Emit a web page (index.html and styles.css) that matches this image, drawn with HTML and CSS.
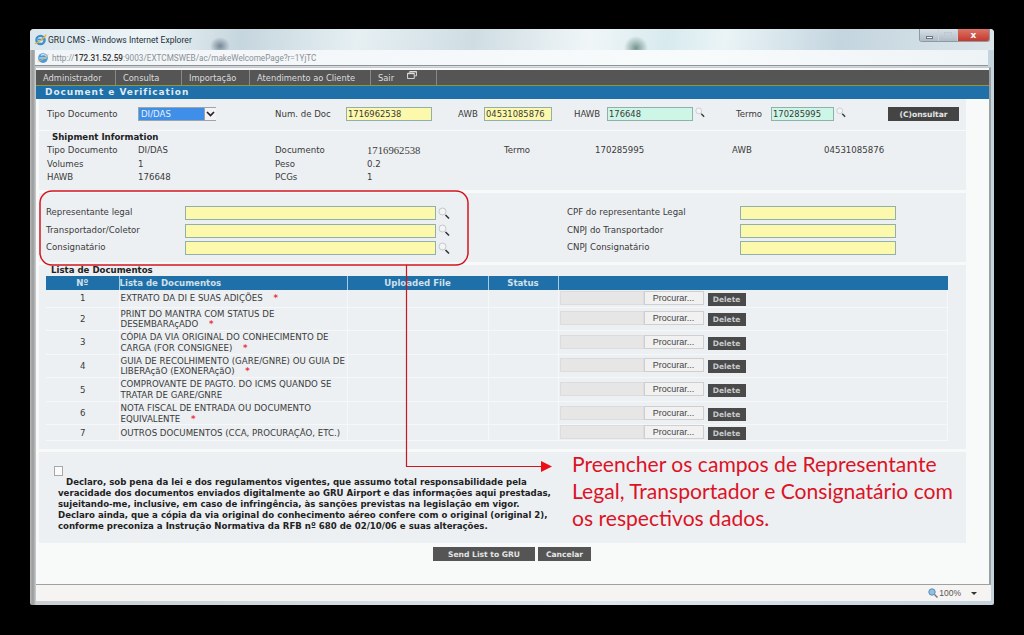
FILE: index.html
```html
<!DOCTYPE html>
<html lang="en">
<head>
    <meta charset="UTF-8">
    <title>GRU CMS - Windows Internet Explorer</title>
    <link rel="stylesheet" href="styles.css">
</head>
<body>
<div class="desktop">
    <div class="ie-window">
        <!-- Title bar -->
        <div class="title-bar">
            <svg class="ie-icon" viewBox="0 0 16 16"><circle cx="8" cy="8.5" r="5" fill="none" stroke="#3f8fd0" stroke-width="3"/><path d="M5 8h7" stroke="#3f8fd0" stroke-width="2"/><path d="M1 13C4 13 13 6 15 2" fill="none" stroke="#e2b53c" stroke-width="1.6"/></svg>
            <span class="title-text">GRU CMS - Windows Internet Explorer</span>
            <div class="win-controls">
                <span class="win-btn"><i class="min-glyph"></i></span>
                <span class="win-btn"><i class="max-glyph"></i></span>
                <span class="win-btn win-close">x</span>
            </div>
        </div>

        <!-- Address bar -->
        <div class="address-bar">
            <svg class="page-icon" viewBox="0 0 16 16"><circle cx="8" cy="8" r="6.5" fill="#4f9ad6"/><path d="M3 8h10M5 4.5c3-2 7-1 8 2" stroke="#d9ecf8" stroke-width="1.6" fill="none"/><path d="M1 12C5 12 12 8 15 3" stroke="#dcb84a" stroke-width="1.2" fill="none"/></svg>
            <span class="url">http://<b>172.31.52.59</b>:9003/EXTCMSWEB/ac/makeWelcomePage?r=1YjTC</span>
        </div>

        <!-- Page -->
        <div class="page">
            <nav class="menu">
                <a class="m-admin">Administrador</a>
                <a class="m-consulta">Consulta</a>
                <a class="m-import">Importação</a>
                <a class="m-atend">Atendimento ao Cliente</a>
                <a class="m-sair">Sair
                    <svg class="restore-icon" viewBox="0 0 11 9"><path d="M3 2V.5h7.5v5H8.500M.5 2.500h7.500v6H.5z" fill="none" stroke="#e8e8e8"/><path d="M.5 3h7.500M3 1h7.500" stroke="#e8e8e8"/></svg>
                </a>
            </nav>
            <div class="page-title">Document e Verification</div>

            <section class="panel search-panel">
                <label>Tipo Documento</label>
                <div class="fake-select"><span>DI/DAS</span><i class="sel-arrow"><svg viewBox="0 0 9 6"><path d="M1 1l3.500 3.500L8 1" fill="none" stroke="#223" stroke-width="1.700"/></svg></i></div>
                <label>Num. de Doc</label>
                <input class="field yellow w86" value="1716962538">
                <label>AWB</label>
                <input class="field yellow w68" value="04531085876">
                <label>HAWB</label>
                <div class="with-lens"><input class="field mint w86" value="176648"><svg class="lens small"><use href="#lens"/></svg></div>
                <label>Termo</label>
                <div class="with-lens"><input class="field mint w63" value="170285995"><svg class="lens small"><use href="#lens"/></svg></div>
                <button class="dark-btn consult">(C)onsultar</button>
            </section>

            <section class="panel ship-panel">
                <h4 class="ship-title">Shipment Information</h4>
                <div class="ship-grid">
                    <span>Tipo Documento</span><span>DI/DAS</span><span>Documento</span><span class="serif-val">1716962538</span><span>Termo</span><span>170285995</span><span>AWB</span><span>04531085876</span>
                    <span>Volumes</span><span>1</span><span>Peso</span><span>0.2</span><span></span><span></span><span></span><span></span>
                    <span>HAWB</span><span>176648</span><span>PCGs</span><span>1</span><span></span><span></span><span></span><span></span>
                </div>
            </section>

            <section class="panel rep-panel">
                <label>Representante legal</label>
                <div class="with-lens"><input class="field yellow w251"><svg class="lens"><use href="#lens"/></svg></div>
                <label>CPF do representante Legal</label>
                <input class="field yellow w156">
                <label>Transportador/Coletor</label>
                <div class="with-lens"><input class="field yellow w251"><svg class="lens"><use href="#lens"/></svg></div>
                <label>CNPJ do Transportador</label>
                <input class="field yellow w156">
                <label>Consignatário</label>
                <div class="with-lens"><input class="field yellow w251"><svg class="lens"><use href="#lens"/></svg></div>
                <label>CNPJ Consignatário</label>
                <input class="field yellow w156">
            </section>

            <section class="panel docs-panel">
                <h4 class="docs-title">Lista de Documentos</h4>
                <table class="docs-table">
                    <colgroup><col class="c-num"><col class="c-name"><col class="c-file"><col class="c-status"><col></colgroup>
                    <thead>
                        <tr><th>Nº</th><th class="left">Lista de Documentos</th><th>Uploaded File</th><th>Status</th><th></th></tr>
                    </thead>
                    <tbody>
                        <tr class="r17"><td class="num">1</td><td class="name">EXTRATO DA DI E SUAS ADIÇÕES <em>*</em></td><td></td><td></td><td><div class="file-row"><span class="file-box"></span><span class="browse">Procurar...</span><span class="del">Delete</span></div></td></tr>
                        <tr><td class="num">2</td><td class="name">PRINT DO MANTRA COM STATUS DE DESEMBARAçADO <em>*</em></td><td></td><td></td><td><div class="file-row"><span class="file-box"></span><span class="browse">Procurar...</span><span class="del">Delete</span></div></td></tr>
                        <tr><td class="num">3</td><td class="name">CÓPIA DA VIA ORIGINAL DO CONHECIMENTO DE CARGA (FOR CONSIGNEE) <em>*</em></td><td></td><td></td><td><div class="file-row"><span class="file-box"></span><span class="browse">Procurar...</span><span class="del">Delete</span></div></td></tr>
                        <tr><td class="num">4</td><td class="name">GUIA DE RECOLHIMENTO (GARE/GNRE) OU GUIA DE LIBERAçãO (EXONERAçãO) <em>*</em></td><td></td><td></td><td><div class="file-row"><span class="file-box"></span><span class="browse">Procurar...</span><span class="del">Delete</span></div></td></tr>
                        <tr><td class="num">5</td><td class="name">COMPROVANTE DE PAGTO. DO ICMS QUANDO SE TRATAR DE GARE/GNRE</td><td></td><td></td><td><div class="file-row"><span class="file-box"></span><span class="browse">Procurar...</span><span class="del">Delete</span></div></td></tr>
                        <tr><td class="num">6</td><td class="name">NOTA FISCAL DE ENTRADA OU DOCUMENTO EQUIVALENTE <em>*</em></td><td></td><td></td><td><div class="file-row"><span class="file-box"></span><span class="browse">Procurar...</span><span class="del">Delete</span></div></td></tr>
                        <tr class="r16"><td class="num">7</td><td class="name">OUTROS DOCUMENTOS (CCA, PROCURAÇÃO, ETC.)</td><td></td><td></td><td><div class="file-row"><span class="file-box"></span><span class="browse">Procurar...</span><span class="del">Delete</span></div></td></tr>
                    </tbody>
                </table>
            </section>

            <section class="panel decl-panel">
                <i class="check"></i>
                <p class="decl-text">Declaro, sob pena da lei e dos regulamentos vigentes, que assumo total responsabilidade pela veracidade dos documentos enviados digitalmente ao GRU Airport e das informações aqui prestadas, sujeitando-me, inclusive, em caso de infringência, às sanções previstas na legislação em vigor. Declaro ainda, que a cópia da via original do conhecimento aéreo confere com o original (original 2), conforme preconiza a Instrução Normativa da RFB nº 680 de 02/10/06 e suas alterações.</p>
            </section>

            <div class="actions">
                <button class="dark-btn send">Send List to GRU</button>
                <button class="dark-btn cancel">Cancelar</button>
            </div>
        </div>

        <!-- Status bar -->
        <div class="status-bar">
            <svg class="zoom-icon" viewBox="0 0 10 10"><circle cx="4" cy="4" r="3.200" fill="#8fc0e4" stroke="#5b8fb8"/><path d="M6.500 6.500L9.500 9.500" stroke="#777" stroke-width="1.500"/></svg>
            <span class="zoom-text">100%</span>
            <i class="zoom-arrow"></i>
        </div>
    </div>

    <!-- Callout drawn over the page -->
    <svg class="callout" viewBox="0 0 1024 635">
        <rect x="40" y="191" width="428" height="74" rx="12" fill="none" stroke="#d3141f" stroke-width="1.500"/>
        <path d="M406.500 265V466.500H541" fill="none" stroke="#c81822" stroke-width="1.200"/>
        <path d="M541 461l11 5.500-11 5.500z" fill="#ee0f16"/>
    </svg>
    <p class="callout-text">Preencher os campos de Representante Legal, Transportador e Consignatário com os respectivos dados.</p>

    <svg class="defs"><defs>
        <symbol id="lens" viewBox="0 0 12 13"><circle cx="4.500" cy="4.500" r="3.500" fill="#f2f4f5" stroke="#c4c9cc"/><path d="M7.500 8l3.500 3.500" stroke="#333" stroke-width="1.600"/></symbol>
    </defs></svg>
</div>
</body>
</html>
```
FILE: styles.css
```css
/* Basic Reset and Font */
* {
    margin: 0;
    padding: 0;
    box-sizing: border-box;
}
body {
    background-color: #000;
    font-family: "DejaVu Sans", Verdana, sans-serif;
    font-size: 8.600px;
    color: #3a3a3a;
}

.desktop {
    position: relative;
    width: 1024px;
    height: 635px;
    padding: 29px 30px;
    overflow: hidden;
}

/* Browser chrome */
.ie-window {
    width: 964px;
    height: 576px;
    border-radius: 4px 4px 2px 2px;
    padding: 0 4px 4px 6px;
    background: linear-gradient(90deg, #b8b8b8 0, #9a9a9a 3px, #c9cfd3 6px, #dce6ec 60%, #c5d3dc 100%);
    display: flex;
    flex-direction: column;
}

.title-bar {
    height: 21px;
    margin: 0 -4px 0 -6px;
    padding: 0 4px 0 4px;
    display: flex;
    align-items: center;
    border-radius: 4px 4px 0 0;
    background:
        radial-gradient(ellipse 10px 9px at 190px 17px, rgba(60, 75, 100, .6), transparent),
        radial-gradient(ellipse 12px 12px at 606px 19px, rgba(70, 110, 100, .7), transparent),
        linear-gradient(100deg, #d9e6ec 0, #eef5f7 12%, #c6d6de 22%, #e6f0f3 34%, #cfdde3 46%, #f0f6f8 58%, #d8eaee 66%, #eaf4f7 72%, #c4d5df 84%, #dbe5ea 100%);
}

.ie-icon {
    width: 13px;
    height: 13px;
    margin-right: 1px;
}

.title-text {
    font-family: Roboto, sans-serif;
    font-size: 8.600px;
    color: #26303a;
}

.win-controls {
    margin-left: auto;
    margin-top: -8px;
    display: flex;
    height: 13px;
    border: 1px solid #8d99a3;
    border-top: 0;
    border-radius: 0 0 3px 3px;
    overflow: hidden;
}

.win-btn {
    width: 19px;
    display: flex;
    align-items: center;
    justify-content: center;
    background: linear-gradient(#d8e0e6, #aebcc6);
    border-right: 1px solid #c8d2d9;
}

.win-close {
    width: 31px;
    border: 0;
    background: linear-gradient(#dc7468, #c4392c);
    color: #fff;
    font-weight: bold;
    font-size: 9px;
}

.min-glyph {
    width: 7px;
    height: 3px;
    margin-top: 4px;
    background: #f4f6f8;
    border: 1px solid #6a7680;
}

.max-glyph {
    width: 8px;
    height: 6px;
    border: 1px solid #bfc9d0;
}

.address-bar {
    height: 16px;
    flex: none;
    margin-right: 2px;
    margin-left: -1px;
    display: flex;
    align-items: center;
    padding-left: 2px;
    background: linear-gradient(90deg, #f1f5f8, #f8fbfc 70%, #eef3f6);
    border-bottom: 1px solid #8f9296;
}

.page-icon {
    width: 12px;
    height: 12px;
    margin-right: 3px;
}

.url {
    font-family: Roboto, sans-serif;
    font-size: 8.200px;
    color: #8a9096;
}

.url b {
    color: #333;
    font-weight: 500;
}

/* Page content */
.page {
    flex: 1;
    min-height: 0;
    margin-top: 1px;
    padding-top: 2px;
    background-color: #f8fafa;
    border-top: 1px solid #c8c8c8;
    border-right: 2px solid #9aa0a4;
    margin-right: -1px;
}

.menu {
    height: 16px;
    background-color: #555;
    border-bottom: 1px solid #8c9a3a;
    display: flex;
    color: #ddd;
    font-size: 8.300px;
    line-height: 16px;
}

.menu a {
    display: block;
    padding-left: 7px;
    border-right: 1px solid #888;
}

.m-admin { width: 80px; }
.m-consulta { width: 66px; }
.m-import { width: 68px; }
.m-atend { width: 121px; }
.m-sair { width: 66px; }

.restore-icon {
    width: 10px;
    height: 8px;
    margin-left: 10px;
    vertical-align: 2px;
}

.page-title {
    height: 13px;
    background-color: #1f6fa8;
    color: #dfeaf2;
    font-weight: bold;
    font-size: 9px;
    letter-spacing: .95px;
    line-height: 13px;
    padding-left: 9px;
}

.panel {
    margin-left: 3px;
    width: 927px;
    background-color: #edf0f2;
}

label {
    white-space: nowrap;
}

.field {
    display: block;
    height: 14px;
    border: 1px solid #8fb0ad;
    font-family: "DejaVu Sans", sans-serif;
    font-size: 8.400px;
    color: #3a3a3a;
    padding-left: 1px;
}

.yellow { background-color: #fdf9ac; }
.mint { background-color: #cdf6e6; }
.w63 { width: 63px; }
.w68 { width: 68px; }
.w86 { width: 86px; }
.w156 { width: 156px; }
.w251 { width: 251px; }

.with-lens {
    display: flex;
    align-items: center;
}

.lens {
    width: 12px;
    height: 13px;
    margin-left: 2px;
}

.lens.small {
    width: 10px;
    height: 11px;
    margin-top: -4px;
}

.search-panel {
    height: 31px;
    padding: 0 0 1px 8px;
    display: grid;
    grid-template-columns: 91px 137px 71px 112px 26px 90px 33px 129px 35px 117px 71px;
    align-items: center;
}

.fake-select {
    width: 78px;
    height: 14px;
    display: flex;
    border: 1px solid #9aa5ad;
    background-color: #3f8ee8;
    color: #e8f1fb;
    line-height: 12px;
    padding-left: 2px;
    justify-content: space-between;
}

.sel-arrow {
    width: 12px;
    margin-right: -1px;
    display: flex;
    align-items: center;
    justify-content: center;
    background-color: #f3f3f3;
    border-left: 1px solid #9aa5ad;
}

.sel-arrow svg {
    width: 9px;
    height: 6px;
}

.dark-btn {
    border: 0;
    background-color: #555;
    color: #e4e4e4;
    font-family: "DejaVu Sans", sans-serif;
    font-weight: bold;
    font-size: 7.600px;
}

.consult {
    width: 71px;
    height: 14px;
    background-color: #444;
}

.ship-panel {
    height: 59px;
    margin-top: 1px;
    padding: 1px 0 0 8px;
}

.ship-title, .docs-title {
    font-size: 8.600px;
    line-height: 11px;
    color: #222;
    padding-left: 5px;
}

.ship-grid {
    display: grid;
    grid-template-columns: 91px 137px 92px 137px 91px 137px 92px 100px;
    grid-auto-rows: 13.500px;
    line-height: 13.500px;
    padding-top: 1px;
}

.serif-val {
    font-family: "Liberation Serif", serif;
    font-size: 10.700px;
}

.rep-panel {
    height: 69px;
    margin-top: 3px;
    padding: 13px 0 0 7px;
    display: grid;
    grid-template-columns: 139px 382px 173px 156px;
    grid-auto-rows: 17.500px;
    align-items: start;
}

.rep-panel label {
    line-height: 12px;
}

.docs-panel {
    height: 184px;
    margin-top: 3px;
    padding: 0 0 0 7px;
}

.docs-table {
    width: 902px;
    table-layout: fixed;
    border-collapse: collapse;
}

.c-num { width: 73px; }
.c-name { width: 228px; }
.c-file { width: 141px; }
.c-status { width: 70px; }

.docs-table th {
    height: 13px;
    padding: 0;
    background-color: #1f6fa8;
    color: #cfe0ec;
    font-size: 8.600px;
    line-height: 14px;
    border-right: 1px solid #a9cbe0;
}

.docs-table th:last-child {
    border-right: 0;
}

.docs-table th.left {
    text-align: left;
}

.docs-table td {
    height: 23.500px;
    padding: 0 0 0 1px;
    line-height: 10.800px;
    border-bottom: 1px solid #f6f7f8;
    border-right: 1px solid #f6f7f8;
    font-size: 8.650px;
    overflow: visible;
}

.docs-table td.name {
    padding-top: 1px;
}

.docs-table .r17 td {
    height: 17px;
}

.docs-table .r16 td {
    height: 16px;
}

.docs-table td.num {
    text-align: center;
    font-size: 8.600px;
    padding-top: 1px;
}

.docs-table em {
    color: #e8354a;
    font-style: normal;
    font-weight: bold;
    margin-left: 8px;
}

.file-row {
    display: flex;
    align-items: flex-start;
    height: 15px;
    font-family: "Liberation Sans", sans-serif;
}

.file-box {
    width: 84px;
    height: 14px;
    background-color: #e6e6e6;
    border: 1px solid #dcdcdc;
}

.browse {
    width: 60px;
    height: 14px;
    border: 1px solid #cfcfcf;
    background-color: #f1f1f1;
    text-align: center;
    font-size: 9px;
    line-height: 12px;
    color: #444;
}

.del {
    width: 38px;
    height: 13px;
    margin: 2px 0 0 4px;
    background-color: #4a4a4a;
    color: #c6cbcd;
    font-family: "DejaVu Sans", sans-serif;
    font-weight: bold;
    font-size: 7.500px;
    line-height: 13px;
    text-align: center;
}

.decl-panel {
    height: 91px;
    margin-top: 3px;
    padding: 14px 0 0 15px;
}

.check {
    display: block;
    width: 9px;
    height: 10px;
    background-color: #fbfbfb;
    border: 1px solid #a8a8a8;
}

.decl-text {
    width: 495px;
    margin: 1px 0 0 4px;
    font-weight: bold;
    font-size: 8.600px;
    line-height: 10.900px;
    color: #222;
    text-indent: 8px;
}

.actions {
    display: flex;
    gap: 3px;
    margin: 4px 0 0 397px;
}

.send {
    width: 102px;
    height: 14px;
}

.cancel {
    width: 53px;
    height: 14px;
}

.status-bar {
    flex: none;
    height: 17px;
    margin-right: -1px;
    border-top: 1px solid #a0a0a0;
    background-color: #f6f3f3;
    display: flex;
    align-items: center;
    justify-content: flex-end;
    padding-right: 14px;
}

.zoom-icon {
    width: 10px;
    height: 10px;
    margin-right: 1px;
}

.zoom-text {
    font-family: "Liberation Sans", sans-serif;
    font-size: 8.500px;
    color: #555;
}

.zoom-arrow {
    width: 0;
    height: 0;
    margin-left: 10px;
    border: 3px solid transparent;
    border-top-color: #333;
    border-bottom: 0;
}

/* Overlay annotation */
.callout {
    position: absolute;
    left: 0;
    top: 0;
    width: 1024px;
    height: 635px;
    pointer-events: none;
}

.callout-text {
    position: absolute;
    left: 572px;
    top: 450px;
    width: 386px;
    font-family: Lato, "Open Sans", sans-serif;
    font-size: 21.100px;
    line-height: 27px;
    color: #dc1326;
}

.defs {
    position: absolute;
    width: 0;
    height: 0;
}
```
